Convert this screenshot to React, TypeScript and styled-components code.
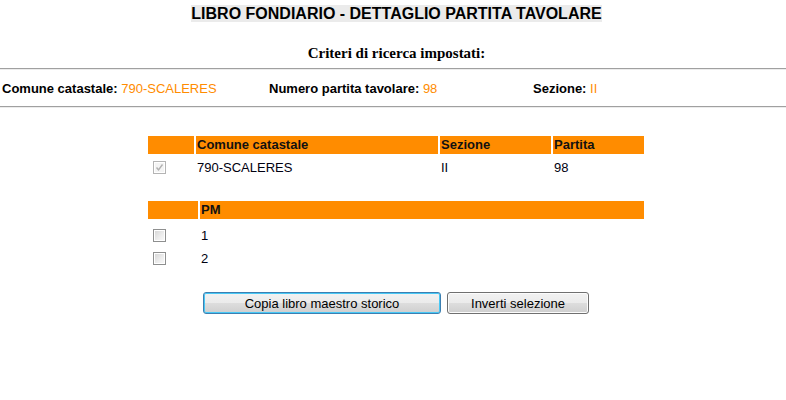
import React from "react";
import styled, { createGlobalStyle } from "styled-components";

const GlobalStyle = createGlobalStyle`
  html, body {
    margin: 0;
    padding: 0;
    background: #fff;
  }
  body {
    font-family: "Liberation Sans", Arial, sans-serif;
    font-size: 13px;
    color: #000;
  }
`;

const Page = styled.div`
  width: 786px;
`;

const Centered = styled.div`
  padding-left: 7px;
`;

const TitleBar = styled.div`
  padding-top: 5px;
  text-align: center;
  line-height: 18px;
`;

const Title = styled.span`
  background: #ebebeb;
  font-size: 16px;
  font-weight: bold;
  color: #000;
`;

const SubTitle = styled.div`
  margin-top: 20px;
  text-align: center;
  font-family: "Liberation Serif", "Times New Roman", serif;
  font-weight: bold;
  font-size: 15px;
  line-height: 18px;
`;

const Rule = styled.hr<{ $top: number }>`
  margin: ${(p) => p.$top}px 0 0 0;
  height: 0;
  border: 0;
  border-top: 1px solid #a0a0a0;
  border-bottom: 1px solid #ececec;
`;

const Criteria = styled.div`
  display: grid;
  grid-template-columns: 267px 264px 1fr;
  align-items: center;
  height: 36px;
  padding-left: 2px;
`;

const Crit = styled.div`
  white-space: nowrap;
`;

const Label = styled.span`
  font-weight: bold;
`;

const Value = styled.span`
  color: #ff8c00;
`;

const Content = styled.div`
  padding-left: 6px;
`;

const Table = styled.div<{ $cols: string; $top: number }>`
  width: 496px;
  margin: ${(p) => p.$top}px auto 0;
  display: grid;
  grid-template-columns: ${(p) => p.$cols};
  column-gap: 2px;
`;

const Head = styled.div`
  background: #ff8c00;
  height: 18px;
  line-height: 18px;
  padding-left: 1px;
  font-weight: bold;
  color: #111;
`;

const Cell = styled.div<{ $h: number; $top?: number }>`
  height: ${(p) => p.$h}px;
  margin-top: ${(p) => p.$top ?? 0}px;
  display: flex;
  align-items: center;
  padding-left: 1px;
  white-space: nowrap;
  color: #000010;
`;

const CheckCell = styled(Cell)`
  padding-left: 5px;
`;

const Box = styled.span<{ $disabled?: boolean }>`
  position: relative;
  display: inline-block;
  width: 13px;
  height: 13px;
  box-sizing: border-box;
  border: 1px solid ${(p) => (p.$disabled ? "#b4b4b4" : "#8e8f8f")};
  box-shadow: inset 0 0 0 1px #fff;
  background: ${(p) =>
    p.$disabled
      ? "#f4f4f4"
      : "linear-gradient(135deg, #d4d4d4 0%, #eeeeee 60%, #fafafa 100%)"};
  svg {
    position: absolute;
    left: 1px;
    top: 1px;
  }
`;

const Buttons = styled.div`
  display: flex;
  justify-content: center;
  gap: 6px;
  margin-top: 22px;
`;

const Button = styled.button<{ $w: number; $focus?: boolean }>`
  width: ${(p) => p.$w}px;
  height: 22px;
  padding: 0;
  font-family: "Liberation Sans", Arial, sans-serif;
  font-size: 13px;
  color: #000;
  border-radius: 3px;
  border: 1px solid ${(p) => (p.$focus ? "#3c7fb1" : "#707070")};
  box-shadow: ${(p) =>
    p.$focus ? "inset 0 0 0 1px #48c8f5" : "inset 0 0 0 1px #fcfcfc"};
  background: linear-gradient(#f2f2f2 0%, #ebebeb 50%, #dddddd 51%, #cfcfcf 100%);
`;

const Check = ({ checked, disabled }: { checked?: boolean; disabled?: boolean }) => (
  <Box $disabled={disabled}>
    {checked && (
      <svg width="9" height="9" viewBox="0 0 9 9">
        <path d="M1.5 4.5 L3.5 6.8 L7.5 1.5" fill="none" stroke="#b0b0b0" strokeWidth="1.4" />
      </svg>
    )}
  </Box>
);

const pmRows = ["1", "2"];

const App = () => (
  <Page>
    <GlobalStyle />
    <Centered>
      <TitleBar>
        <Title>LIBRO FONDIARIO - DETTAGLIO PARTITA TAVOLARE</Title>
      </TitleBar>
      <SubTitle>Criteri di ricerca impostati:</SubTitle>
    </Centered>
    <Rule $top={6} />
    <Criteria>
      <Crit>
        <Label>Comune catastale: </Label>
        <Value>790-SCALERES</Value>
      </Crit>
      <Crit>
        <Label>Numero partita tavolare: </Label>
        <Value>98</Value>
      </Crit>
      <Crit>
        <Label>Sezione: </Label>
        <Value>II</Value>
      </Crit>
    </Criteria>
    <Rule $top={0} />
    <Content>
      <Table $cols="46px 242px 111px 91px" $top={28}>
        <Head />
        <Head>Comune catastale</Head>
        <Head>Sezione</Head>
        <Head>Partita</Head>
        <CheckCell $h={22} $top={2}>
          <Check checked disabled />
        </CheckCell>
        <Cell $h={22} $top={2}>790-SCALERES</Cell>
        <Cell $h={22} $top={2}>II</Cell>
        <Cell $h={22} $top={2}>98</Cell>
      </Table>
      <Table $cols="50px 444px" $top={23}>
        <Head />
        <Head>PM</Head>
        {pmRows.map((n, i) => (
          <React.Fragment key={n}>
            <CheckCell $h={23} $top={i === 0 ? 5 : 0}>
              <Check />
            </CheckCell>
            <Cell $h={23} $top={i === 0 ? 5 : 0}>
              {n}
            </Cell>
          </React.Fragment>
        ))}
      </Table>
      <Buttons>
        <Button $w={238} $focus>
          Copia libro maestro storico
        </Button>
        <Button $w={142}>Inverti selezione</Button>
      </Buttons>
    </Content>
  </Page>
);

export default App;
